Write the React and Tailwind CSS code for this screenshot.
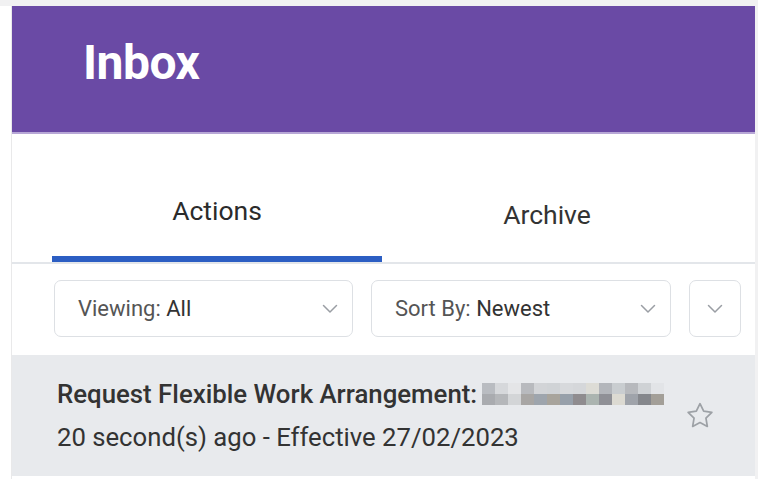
import React from "react";

const font = { fontFamily: "Roboto, 'Liberation Sans', sans-serif" };

function Chevron({ className = "" }) {
  return (
    <svg width="16" height="10" viewBox="0 0 16 10" className={className} fill="none">
      <path d="M1.5 1.5 L8 8 L14.5 1.5" stroke="#9a9ea4" strokeWidth="1.5" strokeLinecap="round" strokeLinejoin="round" />
    </svg>
  );
}

function Star() {
  return (
    <svg width="32" height="32" viewBox="0 0 24 24" fill="none">
      <path
        d="M12 2.8l2.75 5.6 6.15.9-4.45 4.35 1.05 6.15L12 16.9l-5.5 2.9 1.05-6.15L3.1 9.3l6.15-.9L12 2.8z"
        stroke="#9da1a6"
        strokeWidth="1.3"
        strokeLinejoin="round"
      />
    </svg>
  );
}

// pixelated name mask
const mosaic = [
  ["#b9bcc1", "#d6d8db", "#e4e5e7", "#b8babe", "#d2d4d7", "#d0d3d6", "#d7d9dc", "#d5d7da", "#dddcd6", "#b3b6bb", "#c9cdd0", "#b7b9bd", "#cfd2d5", "#e2e4e7"],
  ["#a9abaf", "#b5b7ba", "#d3d5d7", "#a8a6a4", "#9ea5ad", "#a8a49c", "#97a0aa", "#8f8c8f", "#abb4b0", "#8f9096", "#dcdad2", "#9fa3aa", "#85878c", "#a39f98"],
];

export default function App() {
  return (
    <div className="w-[758px] h-[479px] overflow-hidden bg-white flex flex-col" style={font}>
      <div className="h-[6px] bg-[#f1f1f2] shrink-0" />
      <div className="flex flex-1">
        <div className="w-[12px] shrink-0 bg-white border-r border-[#e9e9ea]" />
        <div className="w-[743px] shrink-0 flex flex-col bg-white">
          {/* header */}
          <div className="h-[128px] shrink-0 bg-[#6a4aa5] border-b-[2px] border-[#b7a7d6] flex items-start">
            <h1 className="pl-[71px] pt-[32px] text-[48px] leading-[50px] font-bold text-white tracking-[-0.5px]">Inbox</h1>
          </div>
          <div className="h-[34px] shrink-0 bg-white" />
          {/* tabs */}
          <div className="h-[96px] shrink-0 bg-white border-b-[2px] border-[#e3e6ea] flex pl-[40px]">
            <div className="w-[330px] flex flex-col">
              <div className="flex-1 flex items-start justify-center pt-[27px]">
                <span className="text-[26.5px] leading-[32px] text-[#2b2b2b]">Actions</span>
              </div>
              <div className="h-[6px] bg-[#2c5ec3]" />
            </div>
            <div className="w-[330px] flex items-start justify-center pt-[31px]">
              <span className="text-[26.5px] leading-[32px] text-[#333]">Archive</span>
            </div>
          </div>
          {/* filters */}
          <div className="h-[91px] shrink-0 flex items-start pt-[16px] pl-[42px] gap-[18px]">
            <div className="w-[299px] h-[57px] rounded-[7px] border border-[#dde0e4] flex items-center justify-between pl-[23px] pr-[14px]">
              <span className="text-[22px] text-[#333]">
                <span className="text-[#555]">Viewing:</span> All
              </span>
              <Chevron />
            </div>
            <div className="w-[300px] h-[57px] rounded-[7px] border border-[#dde0e4] flex items-center justify-between pl-[23px] pr-[14px]">
              <span className="text-[22px] text-[#333]">
                <span className="text-[#555]">Sort By:</span> Newest
              </span>
              <Chevron />
            </div>
            <div className="w-[52px] h-[57px] rounded-[7px] border border-[#dde0e4] flex items-center justify-center">
              <Chevron />
            </div>
          </div>
          {/* list item */}
          <div className="h-[121px] shrink-0 bg-[#e8eaed] flex items-center justify-between pl-[45px] pr-[39px]">
            <div className="flex flex-col">
              <div className="flex items-center">
                <span className="text-[25.8px] leading-[43px] font-medium text-[#333]">Request Flexible Work Arrangement:</span>
                <div className="ml-[5px] flex flex-col">
                  {mosaic.map((row, r) => (
                    <div key={r} className="flex">
                      {row.map((c, i) => (
                        <div key={i} className="w-[13px] h-[11px]" style={{ backgroundColor: c }} />
                      ))}
                    </div>
                  ))}
                </div>
              </div>
              <span className="text-[25.7px] leading-[43px] text-[#333]">20 second(s) ago - Effective 27/02/2023</span>
            </div>
            <Star />
          </div>
          <div className="flex-1 bg-white" />
        </div>
        <div className="flex-1 bg-[#f1f1f2]" />
      </div>
    </div>
  );
}
